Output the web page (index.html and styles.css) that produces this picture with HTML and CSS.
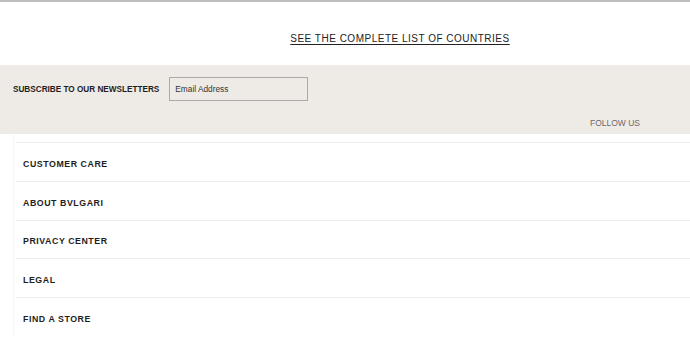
FILE: index.html
```html
<!DOCTYPE html>
<html>
<head>
<meta charset="utf-8">
<link rel="stylesheet" href="styles.css">
</head>
<body>
<div class="page">
  <section class="countries">
    <a class="countries-link" href="#">SEE THE COMPLETE LIST OF COUNTRIES</a>
  </section>
  <section class="newsletter">
    <div class="subscribe">
      <span class="subscribe-label">SUBSCRIBE TO OUR NEWSLETTERS</span>
      <div class="email">Email Address</div>
    </div>
    <div class="follow">FOLLOW US</div>
  </section>
  <section class="links">
    <div class="links-inner">
      <div class="row">CUSTOMER CARE</div>
      <div class="row">ABOUT BVLGARI</div>
      <div class="row">PRIVACY CENTER</div>
      <div class="row">LEGAL</div>
      <div class="row">FIND A STORE</div>
    </div>
  </section>
</div>
</body>
</html>
```
FILE: styles.css
```css
* { box-sizing: border-box; }
html, body { margin: 0; padding: 0; background: #fff; }
body { font-family: "Liberation Sans", Arial, sans-serif; color: #222; }
.page { border-top: 2px solid #bdbdbd; width: 690px; height: 345px; overflow: hidden; }
.countries {
  height: 63px;
  display: flex;
  justify-content: center;
  padding-left: 110px;
  padding-top: 31px;
}
.countries-link {
  font-size: 10px;
  letter-spacing: 0.5px;
  color: #222;
  text-decoration: underline;
  text-underline-offset: 2px;
  line-height: 12px;
  height: 12px;
}
.newsletter {
  background: #eeebe7;
  height: 69px;
  padding: 12px 50px 0 13px;
  display: flex;
  flex-direction: column;
}
.subscribe { display: flex; align-items: center; gap: 10px; }
.subscribe-label { font-size: 8.2px; font-weight: bold; color: #1e1e1e; }
.email {
  width: 139px;
  height: 24px;
  border: 1px solid #a9a9a9;
  font-size: 8.3px;
  color: #333;
  padding-left: 5px;
  display: flex;
  align-items: center;
}
.follow {
  align-self: flex-end;
  margin-top: 17px;
  font-size: 8.5px;
  color: #6a6a6a;
}
.links { padding-left: 13px; }
.links-inner {
  border-left: 1px solid #f6f6f6;
  padding-top: 8px;
}
.row {
  margin-left: 2px;
  height: 38.8px;
  border-top: 1px solid #ececec;
  display: flex;
  align-items: center;
  padding-left: 7px;
  padding-top: 4px;
  font-size: 8.8px;
  font-weight: bold;
  letter-spacing: 0.55px;
  color: #1e1e1e;
}
```
